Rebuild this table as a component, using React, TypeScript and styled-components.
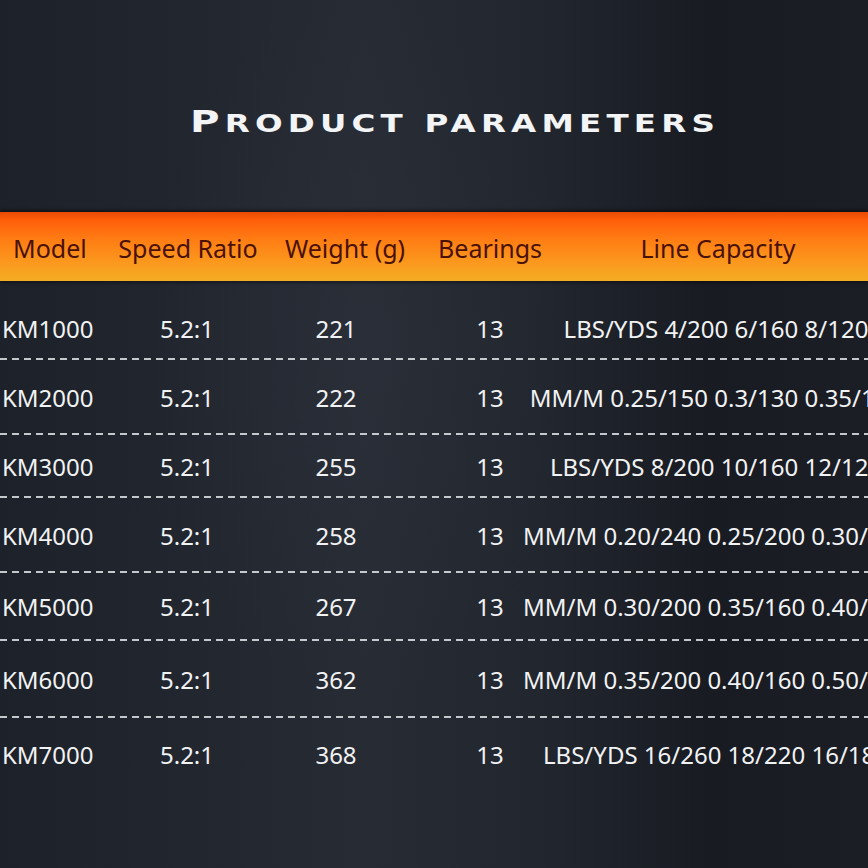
import styled, { createGlobalStyle } from "styled-components";

const GlobalStyle = createGlobalStyle`
  html, body {
    margin: 0;
    padding: 0;
    background: #1e222a;
  }
`;

type Spec = {
  model: string;
  ratio: string;
  weight: string;
  bearings: string;
  capacity: string;
  height: number;
};

const specs: Spec[] = [
  { model: "KM1000", ratio: "5.2:1", weight: "221", bearings: "13", capacity: "LBS/YDS 4/200 6/160 8/120", height: 62 },
  { model: "KM2000", ratio: "5.2:1", weight: "222", bearings: "13", capacity: "MM/M 0.25/150 0.3/130 0.35/100", height: 75 },
  { model: "KM3000", ratio: "5.2:1", weight: "255", bearings: "13", capacity: "LBS/YDS 8/200 10/160 12/120", height: 63 },
  { model: "KM4000", ratio: "5.2:1", weight: "258", bearings: "13", capacity: "MM/M 0.20/240 0.25/200 0.30/150", height: 75 },
  { model: "KM5000", ratio: "5.2:1", weight: "267", bearings: "13", capacity: "MM/M 0.30/200 0.35/160 0.40/120", height: 68 },
  { model: "KM6000", ratio: "5.2:1", weight: "362", bearings: "13", capacity: "MM/M 0.35/200 0.40/160 0.50/120", height: 77 },
  { model: "KM7000", ratio: "5.2:1", weight: "368", bearings: "13", capacity: "LBS/YDS 16/260 18/220 16/180", height: 74 },
];

// header and body columns are not quite aligned in the original sheet
const HEAD_COLUMNS = "130px 116px 198px 92px 364px";
const BODY_COLUMNS = "130px 114px 184px 124px 328px";

const Page = styled.div`
  width: 868px;
  height: 868px;
  overflow: hidden;
  padding-top: 104px;
  box-sizing: border-box;
  font-family: "Noto Sans", "Open Sans", sans-serif;
  background:
    radial-gradient(ellipse 300px 520px at 42% 40%, rgba(52, 58, 70, 0.22), transparent 70%),
    linear-gradient(90deg, #1d2129 0%, #22262f 22%, #272b34 42%, #22262e 62%, #181b22 82%, #1b1e25 100%);
`;

const Title = styled.h1`
  margin: 0;
  padding-left: 42px;
  height: 40px;
  line-height: 40px;
  font-family: "DejaVu Sans", "Liberation Sans", sans-serif;
  font-weight: bold;
  font-size: 25px;
  letter-spacing: 4px;
  color: #f3f4f6;
  text-align: center;
  text-transform: uppercase;
  white-space: nowrap;
  transform: scaleX(1.3);
  transform-origin: 455px 0;
`;

const BigLetter = styled.span`
  font-size: 31px;
  line-height: 1;
`;

const HeaderBand = styled.div`
  margin-top: 68px;
  height: 69px;
  padding-top: 3px;
  box-sizing: border-box;
  background: linear-gradient(180deg, #e84a05 0%, #ff5f0a 12%, #ff7d14 40%, #fb9a1e 75%, #f3ad24 100%);
  box-shadow: 0 -2px 3px rgba(0, 0, 0, 0.45), 0 2px 3px rgba(0, 0, 0, 0.35);
  color: #4a1107;
  font-size: 25px;
`;

const Grid = styled.div<{ $columns: string; $height?: number }>`
  display: grid;
  grid-template-columns: ${(p) => p.$columns};
  align-items: center;
  height: ${(p) => (p.$height ? `${p.$height}px` : "100%")};
`;

const Cell = styled.div<{ $align?: "left" | "center"; $inset?: number }>`
  display: flex;
  justify-content: ${(p) => (p.$align === "left" ? "flex-start" : "center")};
  padding-left: ${(p) => p.$inset ?? 0}px;
  line-height: 1;
  white-space: nowrap;
`;

const Body = styled.div`
  padding-top: 17px;
  color: #f1f2f3;
  font-size: 24px;
`;

const Row = styled(Grid)`
  &:not(:last-child) {
    background-image: repeating-linear-gradient(
      90deg,
      rgba(225, 228, 232, 0.85) 0 7px,
      transparent 7px 12px
    );
    background-size: 100% 2px;
    background-position: left bottom;
    background-repeat: no-repeat;
  }
`;

export default function App() {
  return (
    <Page>
      <GlobalStyle />
      <Title>
        <BigLetter>P</BigLetter>roduct parameters
      </Title>
      <HeaderBand>
        <Grid $columns={HEAD_COLUMNS}>
          <Cell $align="left" $inset={13}>Model</Cell>
          <Cell>Speed Ratio</Cell>
          <Cell>Weight (g)</Cell>
          <Cell>Bearings</Cell>
          <Cell>Line Capacity</Cell>
        </Grid>
      </HeaderBand>
      <Body>
        {specs.map((spec) => (
          <Row key={spec.model} $columns={BODY_COLUMNS} $height={spec.height}>
            <Cell $align="left" $inset={2}>{spec.model}</Cell>
            <Cell>{spec.ratio}</Cell>
            <Cell>{spec.weight}</Cell>
            <Cell>{spec.bearings}</Cell>
            <Cell>{spec.capacity}</Cell>
          </Row>
        ))}
      </Body>
    </Page>
  );
}
